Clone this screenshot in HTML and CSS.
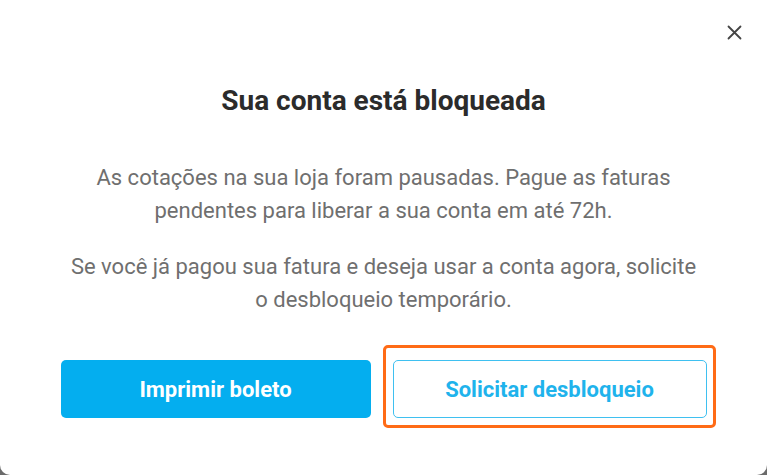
FILE: index.html
```html
<!DOCTYPE html>
<html lang="pt-BR">
<head>
<meta charset="utf-8">
<link rel="stylesheet" href="styles.css">
</head>
<body>
<div class="modal">
  <div class="top">
    <button class="close" aria-label="Fechar">
      <svg width="15" height="15" viewBox="0 0 15 15"><path d="M1.5 1.5 L13.5 13.5 M13.5 1.5 L1.5 13.5" stroke="#444" stroke-width="1.8" stroke-linecap="round"/></svg>
    </button>
  </div>
  <h1 class="title">Sua conta está bloqueada</h1>
  <p class="text">As cotações na sua loja foram pausadas. Pague as faturas pendentes para liberar a sua conta em até 72h.</p>
  <p class="text">Se você já pagou sua fatura e deseja usar a conta agora, solicite o desbloqueio temporário.</p>
  <div class="actions">
    <button class="btn primary">Imprimir boleto</button>
    <div class="highlight-wrap">
      <button class="btn outline">Solicitar desbloqueio</button>
      <span class="highlight"></span>
    </div>
  </div>
</div>
</body>
</html>
```
FILE: styles.css
```css
html, body {
  margin: 0;
  padding: 0;
  height: 100%;
}
body {
  background: #6b6b6b;
  font-family: Roboto, "Liberation Sans", sans-serif;
}
.modal {
  width: 767px;
  height: 475px;
  box-sizing: border-box;
  background: #fff;
  border-radius: 0 0 10px 10px;
  padding: 20px 0 0;
  display: flex;
  flex-direction: column;
  align-items: center;
}
.top {
  align-self: stretch;
  display: flex;
  justify-content: flex-end;
  padding-right: 21px;
}
.close {
  border: 0;
  background: none;
  padding: 4px;
  width: 24px;
  height: 24px;
  display: flex;
  align-items: center;
  justify-content: center;
  cursor: pointer;
}
.title {
  margin: 40px 0 0;
  font-size: 28px;
  font-weight: 700;
  color: #2b2b2b;
  line-height: 34px;
}
.text {
  margin: 43px 0 0;
  width: 632px;
  text-align: center;
  font-size: 22px;
  line-height: 33px;
  color: #6f6f6f;
}
.text + .text {
  margin-top: 23px;
}
.actions {
  margin-top: 44px;
  display: flex;
  gap: 22px;
}
.btn {
  height: 58px;
  border-radius: 5px;
  font-family: Roboto, "Liberation Sans", sans-serif;
  font-size: 22px;
  font-weight: 700;
  cursor: pointer;
}
.primary {
  width: 310px;
  background: #04aeef;
  border: 0;
  color: #fff;
}
.outline {
  width: 314px;
  background: #fff;
  border: 1.5px solid #3fc0f0;
  color: #1fb3ec;
}
.highlight-wrap {
  position: relative;
  display: flex;
}
.highlight {
  position: absolute;
  top: -15px;
  left: -10px;
  right: -9px;
  bottom: -10px;
  border: 3px solid #ff6b16;
  border-radius: 5px;
  pointer-events: none;
}
```
